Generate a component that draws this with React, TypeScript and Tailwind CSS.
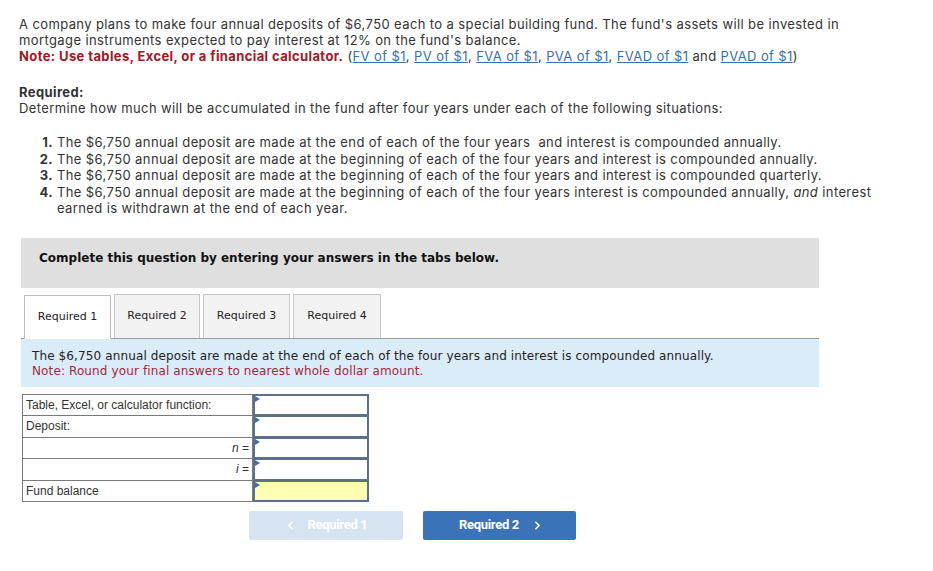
import { ChevronLeft, ChevronRight } from 'lucide-react'

const items = [
  'The $6,750 annual deposit are made at the end of each of the four years  and interest is compounded annually.',
  'The $6,750 annual deposit are made at the beginning of each of the four years and interest is compounded annually.',
  'The $6,750 annual deposit are made at the beginning of each of the four years and interest is compounded quarterly.',
]

const links = ['FV of $1', 'PV of $1', 'FVA of $1', 'PVA of $1', 'FVAD of $1']

function Flag() {
  return <span className="absolute left-0 top-0 w-0 h-0 border-y-[3px] border-y-transparent border-l-[5px] border-l-[#3f6fa8]"></span>
}

function Row({ label, right, h, yellow }: { label: React.ReactNode; right?: boolean; h: string; yellow?: boolean }) {
  return (
    <div className={`flex -mt-px ${h}`}>
      <div className={`w-[231px] border border-[#7a7a7a] px-[3px] flex items-center ${right ? 'justify-end' : ''}`}>
        {label}
      </div>
      <div className={`relative w-[116px] border-2 border-[#5d7088] ${yellow ? 'bg-[#ffffb3]' : 'bg-white'}`}>
        <Flag />
      </div>
    </div>
  )
}

export default function App() {
  return (
    <div className="w-[933px] h-[571px] bg-white overflow-hidden">
      <div className="pt-[16px] pl-[19px] font-['Inter',sans-serif] text-[13px] leading-[16px] tracking-[0.39px] text-[#333] whitespace-nowrap">
        <p>
          A company plans to make four annual deposits of $6,750 each to a special building fund. The fund's assets will be invested in
          <br />
          mortgage instruments expected to pay interest at 12% on the fund's balance.
        </p>
        <p>
          <span className="font-bold text-[#a3171f]">Note: Use tables, Excel, or a financial calculator.</span>{' '}
          (
          {links.map((l, i) => (
            <span key={l}>
              <span className="underline text-[#3b6ea5]">{l}</span>
              {i < links.length - 1 ? ', ' : ''}
            </span>
          ))}{' '}
          and <span className="underline text-[#3b6ea5]">PVAD of $1</span>)
        </p>

        <p className="mt-[20px] font-bold">Required:</p>
        <p>Determine how much will be accumulated in the fund after four years under each of the following situations:</p>

        <ol className="mt-[18px] pl-[19px] leading-[16.5px]">
          {items.map((t, i) => (
            <li key={i} className="flex">
              <span className="w-[19px] shrink-0 font-bold text-right pr-[4px]">{i + 1}.</span>
              <span className="whitespace-pre">{t}</span>
            </li>
          ))}
          <li className="flex">
            <span className="w-[19px] shrink-0 font-bold text-right pr-[4px]">4.</span>
            <span>
              The $6,750 annual deposit are made at the beginning of each of the four years interest is compounded annually, <i>and</i> interest
              <br />
              earned is withdrawn at the end of each year.
            </span>
          </li>
        </ol>
      </div>

      <div className="ml-[21px] mt-[21px] w-[798px] font-['DejaVu_Sans','Verdana',sans-serif]">
        <div className="h-[50px] bg-[#dfdfdf] pl-[18px] pt-[13px] text-[12px] leading-[14px] font-bold text-[#111]">
          Complete this question by entering your answers in the tabs below.
        </div>

        <div className="mt-[7px] flex items-end gap-[3px] border-b border-[#9a9a9a] pl-[3px] h-[44px] text-[11px] text-[#222]">
          <div className="w-[87px] h-[44px] bg-white border border-[#bdbdbd] border-b-0 -mb-px flex items-center justify-center pt-px">Required 1</div>
          <div className="w-[86px] h-[44px] bg-[#f2f2f2] border border-[#c8c8c8] border-b-0 flex items-center justify-center pt-px">Required 2</div>
          <div className="w-[87px] h-[44px] bg-[#f2f2f2] border border-[#c8c8c8] border-b-0 flex items-center justify-center pt-px">Required 3</div>
          <div className="w-[88px] h-[44px] bg-[#f2f2f2] border border-[#c8c8c8] border-b-0 flex items-center justify-center pt-px">Required 4</div>
        </div>

        <div className="h-[48px] bg-[#dbecf9] pl-[11px] pt-[10px] text-[12px] leading-[15px] tracking-[0.12px] text-[#222]">
          <p>The $6,750 annual deposit are made at the end of each of the four years and interest is compounded annually.</p>
          <p className="text-[#a3283a]">Note: Round your final answers to nearest whole dollar amount.</p>
        </div>

        <div className="mt-[8px] ml-px font-['Liberation_Sans',Arial,sans-serif] text-[12px] text-[#333]">
          <Row h="h-[22px]" label="Table, Excel, or calculator function:" />
          <Row h="h-[23px]" label="Deposit:" />
          <Row h="h-[22px]" right label={<span><i>n</i> =</span>} />
          <Row h="h-[23px]" right label={<span><i>i</i> =</span>} />
          <Row h="h-[22px]" yellow label="Fund balance" />
        </div>

        <div className="mt-[9px] ml-[228px] flex gap-[20px] font-['Roboto',sans-serif] text-[13px] font-bold text-white">
          <div className="w-[154px] h-[29px] rounded-[2px] bg-[#d6e3f1] flex items-center justify-center gap-[10px]">
            <ChevronLeft size={13} strokeWidth={3} />
            <span className="tracking-[-0.3px]">Required 1</span>
          </div>
          <div className="w-[153px] h-[29px] rounded-[2px] bg-[#3a73b8] flex items-center justify-center gap-[12px] pl-[4px]">
            <span className="tracking-[-0.3px]">Required 2</span>
            <ChevronRight size={13} strokeWidth={3} />
          </div>
        </div>
      </div>
    </div>
  )
}
